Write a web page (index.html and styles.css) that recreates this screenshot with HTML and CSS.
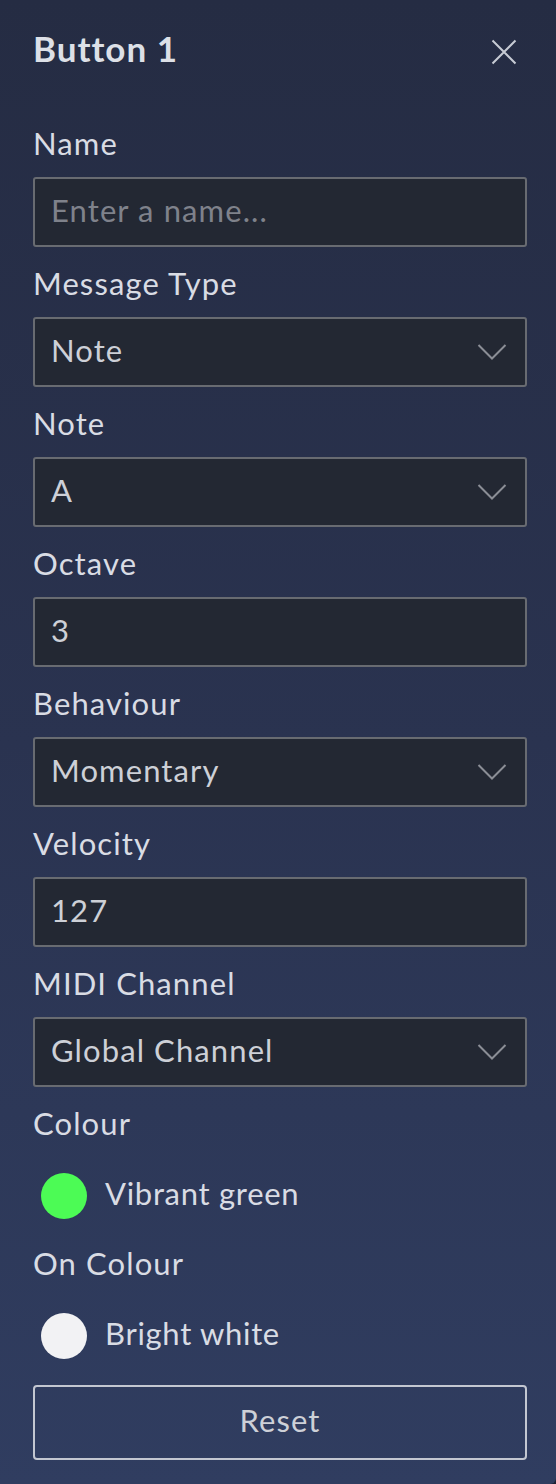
FILE: index.html
```html
<!DOCTYPE html>
<html lang="en">
<head>
<meta charset="utf-8">
<title>Button 1</title>
<link rel="stylesheet" href="styles.css">
</head>
<body>
<div class="panel">
  <div class="header">
    <h1 class="title">Button 1</h1>
    <button class="close" aria-label="Close">
      <svg width="26" height="26" viewBox="0 0 26 26"><path d="M1.5 1.5 L24.5 24.5 M24.5 1.5 L1.5 24.5" stroke="#c7cbd4" stroke-width="2" fill="none"/></svg>
    </button>
  </div>

  <div class="field">
    <label class="label">Name</label>
    <div class="input placeholder">Enter a name...</div>
  </div>
  <div class="field">
    <label class="label">Message Type</label>
    <div class="input select"><span>Note</span><svg class="chev" width="30" height="18" viewBox="0 0 30 18"><path d="M1.5 2 L15 15.5 L28.5 2" stroke="#8b8e96" stroke-width="2" fill="none"/></svg></div>
  </div>
  <div class="field">
    <label class="label">Note</label>
    <div class="input select"><span>A</span><svg class="chev" width="30" height="18" viewBox="0 0 30 18"><path d="M1.5 2 L15 15.5 L28.5 2" stroke="#8b8e96" stroke-width="2" fill="none"/></svg></div>
  </div>
  <div class="field">
    <label class="label">Octave</label>
    <div class="input">3</div>
  </div>
  <div class="field">
    <label class="label">Behaviour</label>
    <div class="input select"><span>Momentary</span><svg class="chev" width="30" height="18" viewBox="0 0 30 18"><path d="M1.5 2 L15 15.5 L28.5 2" stroke="#8b8e96" stroke-width="2" fill="none"/></svg></div>
  </div>
  <div class="field">
    <label class="label">Velocity</label>
    <div class="input">127</div>
  </div>
  <div class="field">
    <label class="label">MIDI Channel</label>
    <div class="input select"><span>Global Channel</span><svg class="chev" width="30" height="18" viewBox="0 0 30 18"><path d="M1.5 2 L15 15.5 L28.5 2" stroke="#8b8e96" stroke-width="2" fill="none"/></svg></div>
  </div>
  <div class="field">
    <label class="label">Colour</label>
    <div class="swatch-row"><span class="swatch green"></span><span class="swatch-name">Vibrant green</span></div>
  </div>
  <div class="field">
    <label class="label">On Colour</label>
    <div class="swatch-row"><span class="swatch white"></span><span class="swatch-name">Bright white</span></div>
  </div>
  <button class="reset">Reset</button>
</div>
</body>
</html>
```

FILE: styles.css
```css
html, body {
  margin: 0;
  padding: 0;
  height: 100%;
}
body {
  background: #1d2335;
  font-family: "Lato", "Noto Sans", sans-serif;
}
.panel {
  box-sizing: border-box;
  min-height: 1484px;
  padding: 27px 29px 0 33px;
  background: linear-gradient(to bottom, #252c43 0%, #2a3350 50%, #303d60 100%);
  border-radius: 0 0 6px 0;
  display: flex;
  flex-direction: column;
}
.header {
  display: flex;
  justify-content: space-between;
  align-items: flex-start;
  margin-bottom: 56px;
}
.title {
  margin: 0;
  font-size: 35px;
  line-height: 42px;
  font-weight: 700;
  letter-spacing: 1px;
  color: #dde0e7;
}
.close {
  background: none;
  border: 0;
  padding: 0;
  margin: 12px 10px 0 0;
  width: 26px;
  height: 26px;
  display: block;
}
.close svg { display: block; }
.field {
  display: flex;
  flex-direction: column;
  margin-bottom: 18px;
}
.label {
  font-size: 31px;
  line-height: 36px;
  letter-spacing: 1.1px;
  color: #d9dce4;
  margin-bottom: 16px;
}
.input {
  box-sizing: border-box;
  height: 70px;
  border: 2px solid #686b71;
  border-radius: 3px;
  background: #232833;
  padding: 0 18px 5px 16px;
  display: flex;
  align-items: center;
  font-size: 31px;
  letter-spacing: 1.1px;
  color: #cdd0d7;
}
.placeholder { color: #7f828b; }
.select { justify-content: space-between; }
.chev { display: block; margin-top: 5px; }
.swatch-row {
  display: flex;
  align-items: center;
  gap: 18px;
  margin: 16px 0 8px 8px;
  height: 46px;
}
.swatch {
  width: 46px;
  height: 46px;
  border-radius: 50%;
  flex: none;
}
.green { background: #4cfb55; }
.white { background: #f2f2f4; }
.swatch-name {
  font-size: 31px;
  letter-spacing: 0.7px;
  color: #d9dce4;
  margin-top: -6px;
}
.reset {
  box-sizing: border-box;
  height: 75px;
  margin-top: 0;
  padding: 0 0 5px;
  border: 2px solid #c3c7d1;
  border-radius: 4px;
  background: transparent;
  font-family: "Lato", "Noto Sans", sans-serif;
  font-size: 31px;
  letter-spacing: 1.1px;
  color: #cdd0d7;
}
```
